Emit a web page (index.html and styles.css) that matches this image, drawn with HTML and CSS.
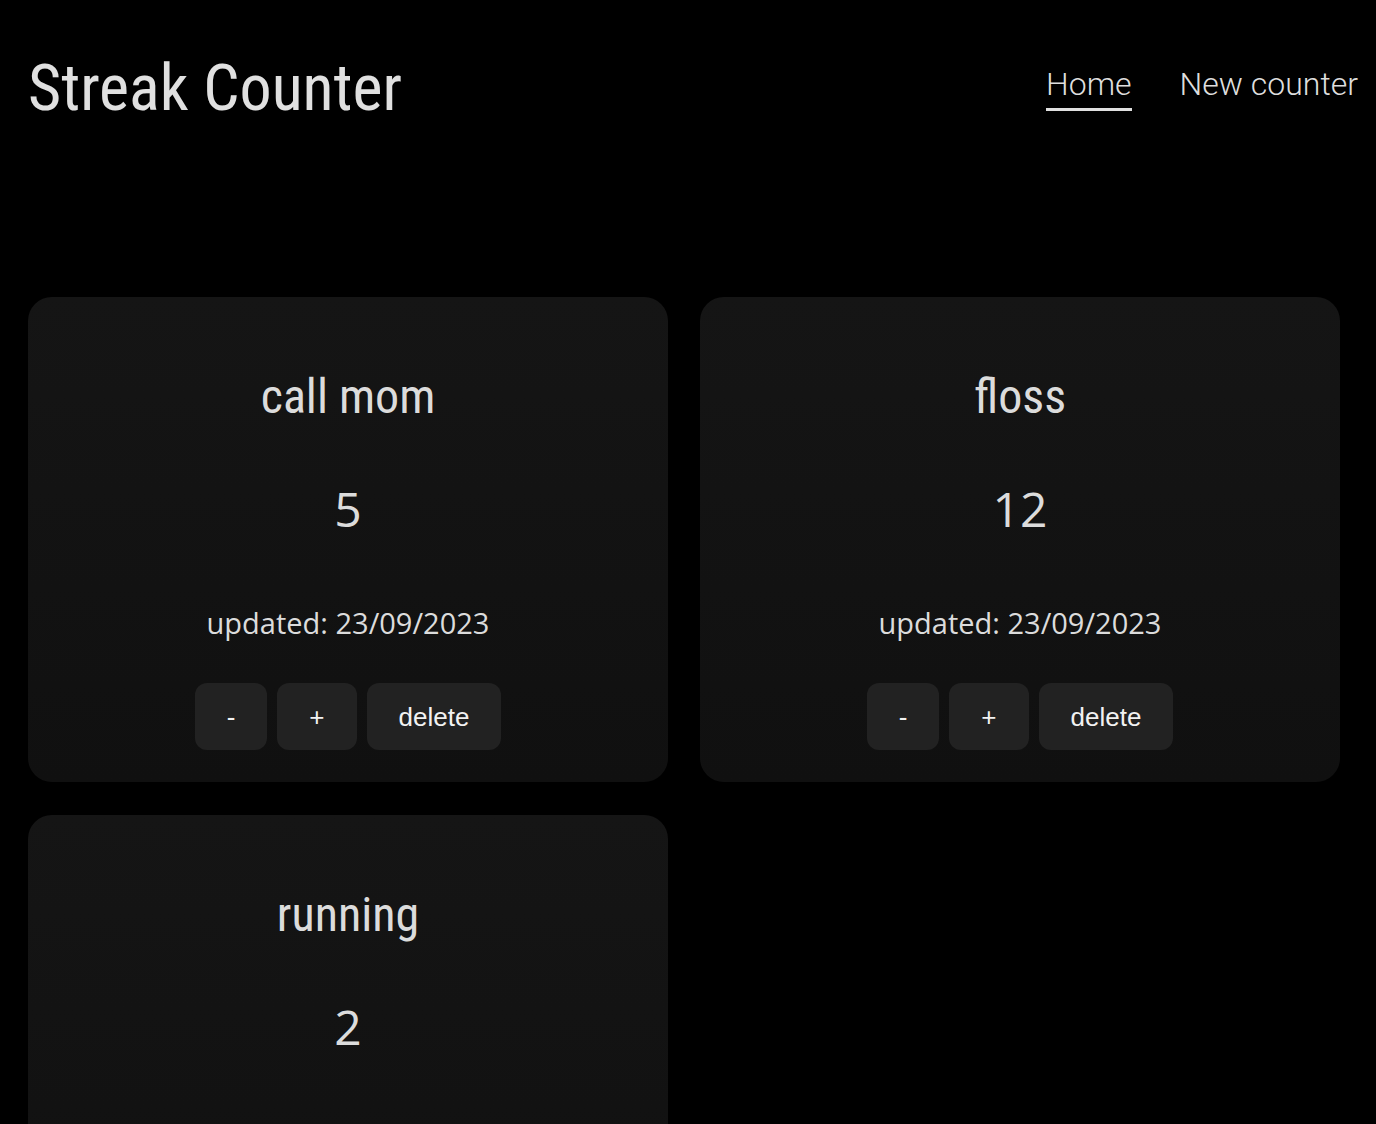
FILE: index.html
```html
<!DOCTYPE html>
<html lang="en">
<head>
<meta charset="utf-8">
<title>Streak Counter</title>
<link rel="stylesheet" href="styles.css">
</head>
<body>
<header class="top">
  <h1 class="brand">Streak Counter</h1>
  <nav class="nav">
    <a class="nav-link active" href="#">Home</a>
    <a class="nav-link" href="#">New counter</a>
  </nav>
</header>
<main class="grid">
  <section class="card">
    <h2 class="card-title">call mom</h2>
    <div class="count">5</div>
    <p class="updated">updated: 23/09/2023</p>
    <div class="actions">
      <button class="btn">-</button>
      <button class="btn">+</button>
      <button class="btn">delete</button>
    </div>
  </section>
  <section class="card">
    <h2 class="card-title">floss</h2>
    <div class="count">12</div>
    <p class="updated">updated: 23/09/2023</p>
    <div class="actions">
      <button class="btn">-</button>
      <button class="btn">+</button>
      <button class="btn">delete</button>
    </div>
  </section>
  <section class="card">
    <h2 class="card-title">running</h2>
    <div class="count">2</div>
    <p class="updated">updated: 23/09/2023</p>
    <div class="actions">
      <button class="btn">-</button>
      <button class="btn">+</button>
      <button class="btn">delete</button>
    </div>
  </section>
</main>
</body>
</html>
```
FILE: styles.css
```css
html, body {
  margin: 0;
  padding: 0;
  background: #000;
  color: #dedede;
}
body {
  font-family: "Open Sans", sans-serif;
}
.top {
  display: flex;
  justify-content: space-between;
  align-items: flex-start;
  padding: 0 18px 0 28px;
}
.brand {
  margin: 50px 0 0;
  font-family: "Roboto Condensed", "Roboto", sans-serif;
  font-stretch: condensed;
  font-weight: 400;
  font-size: 64px;
  line-height: 77px;
  color: #e0e0e0;
}
.nav {
  display: flex;
  gap: 48px;
  margin-top: 66px;
}
.nav-link {
  font-family: "Roboto", sans-serif;
  font-weight: 300;
  font-size: 32px;
  line-height: 37px;
  color: #dedede;
  text-decoration: none;
  padding-bottom: 5px;
  border-bottom: 3px solid transparent;
}
.nav-link.active {
  border-bottom-color: #e0e0e0;
}
.grid {
  display: grid;
  grid-template-columns: 640px 640px;
  column-gap: 32px;
  row-gap: 33px;
  padding: 0 0 0 28px;
  margin-top: 170px;
}
.card {
  display: flex;
  flex-direction: column;
  align-items: center;
  padding: 32px;
  border-radius: 24px;
  background: linear-gradient(180deg, #151515 0%, #101010 100%);
}
.card-title {
  margin: 40px 0 0;
  font-family: "Roboto Condensed", "Roboto", sans-serif;
  font-stretch: condensed;
  font-weight: 400;
  font-size: 48px;
  line-height: 56px;
  color: #dcdcdc;
}
.count {
  margin-top: 51px;
  font-size: 48px;
  line-height: 66px;
  color: #dcdcdc;
}
.updated {
  margin: 62px 0 0;
  font-size: 29px;
  line-height: 38px;
  color: #dcdcdc;
}
.actions {
  display: flex;
  gap: 10px;
  margin-top: 41px;
}
.btn {
  font-family: "Liberation Sans", Arial, sans-serif;
  font-size: 26px;
  line-height: 32px;
  padding: 18px 32px 17px;
  border: none;
  border-radius: 12px;
  background: #222;
  color: #f2f2f2;
}
```
